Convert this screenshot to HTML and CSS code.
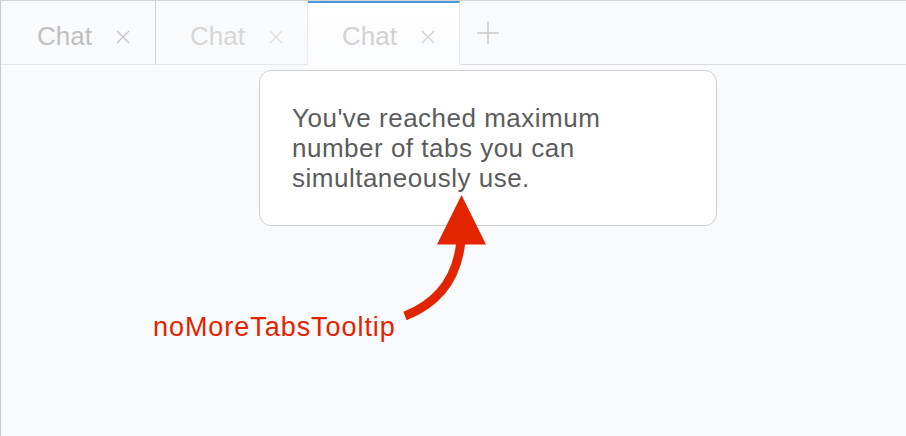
FILE: index.html
```html
<!DOCTYPE html>
<html>
<head>
<meta charset="utf-8">
<link rel="stylesheet" href="styles.css">
</head>
<body>
<div class="frame">
  <div class="tabbar">
    <div class="tab tab-first">
      <span class="tab-label">Chat</span>
      <svg class="tab-close" width="14" height="14" viewBox="0 0 14 14"><path d="M1 1L13 13M13 1L1 13" /></svg>
    </div>
    <div class="tab tab-faded">
      <span class="tab-label">Chat</span>
      <svg class="tab-close" width="14" height="14" viewBox="0 0 14 14"><path d="M1 1L13 13M13 1L1 13" /></svg>
    </div>
    <div class="tab tab-active">
      <span class="tab-label">Chat</span>
      <svg class="tab-close" width="14" height="14" viewBox="0 0 14 14"><path d="M1 1L13 13M13 1L1 13" /></svg>
    </div>
    <div class="tab-add">
      <svg width="24" height="24" viewBox="0 0 24 24"><path d="M12 1V23M1 12H23" /></svg>
    </div>
    <div class="tab-rest"></div>
  </div>
  <div class="content"></div>

  <div class="tooltip">You've reached maximum number of tabs you can simultaneously use.</div>

  <svg class="arrow" width="906" height="436" viewBox="0 0 906 436">
    <path class="arrow-line" d="M405 316Q456 296 461 240" />
    <path class="arrow-head" d="M461.5 195L486 244.5H437Z" />
  </svg>
  <div class="annotation">noMoreTabsTooltip</div>
</div>
</body>
</html>
```

FILE: styles.css
```css
html, body {
  margin: 0;
  padding: 0;
}
body {
  width: 906px;
  height: 436px;
  overflow: hidden;
  background: #f9fafb;
  font-family: "Liberation Sans", Arial, sans-serif;
}
.frame {
  position: relative;
  width: 905px;
  height: 435px;
  border-top: 1px solid #d3d3d3;
  border-left: 1px solid #c8c8c8;
  background: #f9fafb;
}
.tabbar {
  display: flex;
  height: 64px;
}
.tab {
  display: flex;
  align-items: center;
  box-sizing: border-box;
  width: 153px;
  height: 64px;
  padding: 8px 0 0 34px;
  border-bottom: 1px solid #e4e5e7;
}
.tab-label {
  font-size: 26px;
  color: #bfbfbf;
  width: 55px;
}
.tab-close {
  margin-left: 24px;
  fill: none;
  stroke: #c6c6c6;
  stroke-width: 1.4;
}
.tab-first {
  width: 155px;
  padding-left: 36px;
  border-right: 1px solid #cfcfcf;
}
.tab-faded {
  width: 152px;
  border-right: 1px solid #ededee;
}
.tab-faded .tab-label {
  color: #d6d6d6;
}
.tab-faded .tab-close {
  stroke: #e2e2e2;
}
.tab-active {
  width: 152px;
  border-top: 2px solid #4a97d9;
  border-right: 1px solid #e8e8e8;
  border-bottom: 1px solid transparent;
  background: linear-gradient(#ffffff, #fafbfc);
  padding-top: 6px;
}
.tab-active .tab-label {
  color: #d2d2d2;
}
.tab-active .tab-close {
  stroke: #d4d4d4;
}
.tab-add {
  display: flex;
  align-items: center;
  box-sizing: border-box;
  height: 64px;
  padding: 0 0 0 16px;
  width: 60px;
  border-bottom: 1px solid #dcdcde;
}
.tab-add svg {
  fill: none;
  stroke: #c9c9c9;
  stroke-width: 1.5;
}
.tab-rest {
  flex: 1;
  height: 64px;
  box-sizing: border-box;
  border-bottom: 1px solid #dcdcde;
}
.tooltip {
  position: absolute;
  left: 258px;
  top: 69px;
  width: 392px;
  padding: 32px;
  min-height: 90px;
  background: #ffffff;
  border: 1px solid #cfcfcf;
  border-radius: 12px;
  font-size: 26px;
  line-height: 30px;
  letter-spacing: 0.5px;
  color: #5c5c5c;
}
.arrow {
  position: absolute;
  left: -1px;
  top: -1px;
}
.arrow-line {
  fill: none;
  stroke: #e22400;
  stroke-width: 9;
}
.arrow-head {
  fill: #e22400;
}
.annotation {
  position: absolute;
  left: 152px;
  top: 310px;
  font-size: 27px;
  line-height: 32px;
  letter-spacing: 0.95px;
  color: #e22400;
}
```
